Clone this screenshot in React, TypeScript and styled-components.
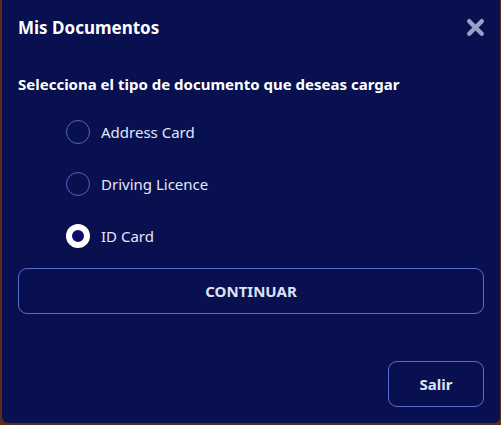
import React, { useState } from "react";
import styled, { createGlobalStyle } from "styled-components";

const Global = createGlobalStyle`
  html, body { margin: 0; padding: 0; }
  body {
    background: #5b2d1c;
    font-family: "Noto Sans", "Open Sans", sans-serif;
    width: 501px;
    height: 425px;
    overflow: hidden;
  }
`;

const Dialog = styled.div`
  margin-left: 2px;
  width: 498px;
  height: 423px;
  box-sizing: border-box;
  background: #08104f;
  border-radius: 0 0 6px 6px;
  padding: 0 16px 16px 16px;
  display: flex;
  flex-direction: column;
  color: #ffffff;
`;

const Header = styled.div`
  display: flex;
  align-items: center;
  justify-content: space-between;
  height: 54px;
`;

const Title = styled.h2`
  margin: 0;
  font-size: 17px;
  font-weight: 700;
  color: #ffffff;
`;

const CloseButton = styled.button`
  background: none;
  border: none;
  padding: 0;
  width: 20px;
  height: 20px;
  display: flex;
  align-items: center;
  justify-content: center;
  cursor: pointer;
  margin-right: -1px;
`;

const Subtitle = styled.p`
  margin: 18px 0 0 0;
  font-size: 15px;
  font-weight: 700;
  line-height: 24px;
  color: #ffffff;
`;

const Options = styled.div`
  display: flex;
  flex-direction: column;
  gap: 28px;
  margin: 24px 0 0 48px;
`;

const Option = styled.label`
  display: flex;
  align-items: center;
  gap: 11px;
  height: 24px;
  cursor: pointer;
  font-size: 15px;
  color: #e4e7fa;
`;

const Radio = styled.span<{ $checked: boolean }>`
  width: 24px;
  height: 24px;
  box-sizing: border-box;
  border-radius: 50%;
  border: ${(p) => (p.$checked ? "6px solid #ffffff" : "1px solid #5563c4")};
  background: ${(p) => (p.$checked ? "#0e0b6a" : "transparent")};
  flex-shrink: 0;
`;

const PrimaryButton = styled.button`
  margin-top: 20px;
  height: 46px;
  width: 100%;
  box-sizing: border-box;
  background: transparent;
  border: 1px solid #5a6bd2;
  border-radius: 9px;
  color: #dde2f8;
  font-family: inherit;
  font-size: 15px;
  font-weight: 700;
  cursor: pointer;
`;

const Footer = styled.div`
  margin-top: auto;
  display: flex;
  justify-content: flex-end;
`;

const SecondaryButton = styled.button`
  width: 96px;
  height: 46px;
  box-sizing: border-box;
  background: transparent;
  border: 1px solid #5a6bd2;
  border-radius: 9px;
  color: #dde2f8;
  font-family: inherit;
  font-size: 15px;
  font-weight: 700;
  cursor: pointer;
`;

const options = ["Address Card", "Driving Licence", "ID Card"];

export default function App() {
  const [selected, setSelected] = useState("ID Card");
  return (
    <>
      <Global />
      <Dialog>
        <Header>
          <Title>Mis Documentos</Title>
          <CloseButton aria-label="Cerrar">
            <svg width="19" height="19" viewBox="0 0 19 19">
              <path
                d="M3.2 3.2 L15.8 15.8 M15.8 3.2 L3.2 15.8"
                stroke="#9aa0c8"
                strokeWidth="4.4"
                strokeLinecap="round"
              />
            </svg>
          </CloseButton>
        </Header>
        <Subtitle>Selecciona el tipo de documento que deseas cargar</Subtitle>
        <Options>
          {options.map((o) => (
            <Option key={o} onClick={() => setSelected(o)}>
              <Radio $checked={selected === o} />
              {o}
            </Option>
          ))}
        </Options>
        <PrimaryButton>CONTINUAR</PrimaryButton>
        <Footer>
          <SecondaryButton>Salir</SecondaryButton>
        </Footer>
      </Dialog>
    </>
  );
}
